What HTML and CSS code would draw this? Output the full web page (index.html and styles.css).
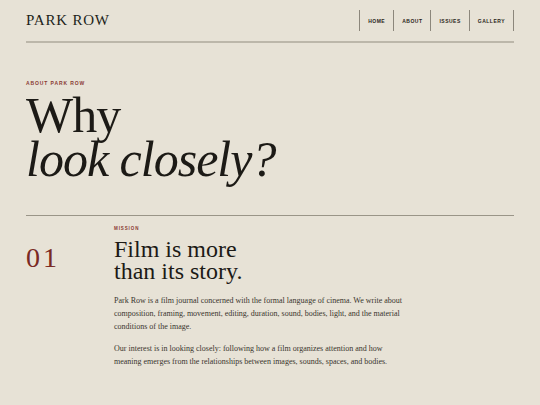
FILE: index.html
```html
<!DOCTYPE html>
<html lang="en">
<head>
<meta charset="utf-8">
<title>Park Row — About</title>
<link rel="stylesheet" href="styles.css">
</head>
<body>
<div class="page">
  <header class="site-header">
    <div class="logo">PARK ROW</div>
    <nav class="nav">
      <a class="nav-item" href="#">HOME</a>
      <a class="nav-item" href="#">ABOUT</a>
      <a class="nav-item" href="#">ISSUES</a>
      <a class="nav-item" href="#">GALLERY</a>
    </nav>
  </header>

  <section class="intro">
    <div class="eyebrow">ABOUT PARK ROW</div>
    <h1 class="title">Why<br><em>look closely?</em></h1>
  </section>

  <section class="mission">
    <div class="num">01</div>
    <div class="mission-body">
      <div class="eyebrow small">MISSION</div>
      <h2 class="heading">Film is more<br>than its story.</h2>
      <p class="para">Park Row is a film journal concerned with the formal language of cinema. We write about composition, framing, movement, editing, duration, sound, bodies, light, and the material conditions of the image.</p>
      <p class="para">Our interest is in looking closely: following how a film organizes attention and how meaning emerges from the relationships between images, sounds, spaces, and bodies.</p>
    </div>
  </section>
</div>
</body>
</html>
```

FILE: styles.css
```css
html, body {
  margin: 0;
  padding: 0;
  background: #e7e2d6;
  color: #221f1a;
  font-family: "Liberation Serif", "Times New Roman", serif;
}

.page {
  padding: 0 26px;
}

.site-header {
  display: flex;
  justify-content: space-between;
  align-items: center;
  padding: 10px 0;
  border-bottom: 2px solid #bcb7aa;
}

.logo {
  font-size: 15px;
  letter-spacing: 0.8px;
  line-height: 21px;
  color: #221f1a;
}

.nav {
  display: flex;
}

.nav-item {
  display: flex;
  align-items: center;
  height: 21px;
  padding: 0 8px;
  border-left: 1px solid #8c877c;
  font-family: "Liberation Sans", Arial, sans-serif;
  font-weight: bold;
  font-size: 5px;
  letter-spacing: 0.5px;
  color: #2a2620;
  text-decoration: none;
}

.nav-item:last-child {
  border-right: 1px solid #8c877c;
}

.intro {
  padding-top: 37px;
  padding-bottom: 34px;
}

.eyebrow {
  font-family: "Liberation Sans", Arial, sans-serif;
  font-weight: bold;
  font-size: 5px;
  line-height: 6px;
  letter-spacing: 0.9px;
  color: #8a3a33;
}

.title {
  margin: 7px 0 0;
  font-weight: normal;
  font-size: 50px;
  line-height: 44px;
  letter-spacing: -1px;
  color: #1c1a16;
}

.title em {
  font-style: italic;
}

.mission {
  display: grid;
  grid-template-columns: 88px 1fr;
  border-top: 1px solid #9a9588;
  padding-top: 10px;
}

.num {
  padding-top: 21px;
  font-size: 28px;
  line-height: 22px;
  letter-spacing: 3px;
  color: #7a2a24;
}

.eyebrow.small {
  font-size: 4.5px;
}

.heading {
  margin: 6px 0 0;
  font-weight: normal;
  font-size: 24px;
  line-height: 22px;
  color: #1c1a16;
}

.para {
  margin: 12px 0 0;
  width: 295px;
  font-size: 8px;
  line-height: 13px;
  color: #3a352e;
}

.para + .para {
  margin-top: 9px;
}
```
